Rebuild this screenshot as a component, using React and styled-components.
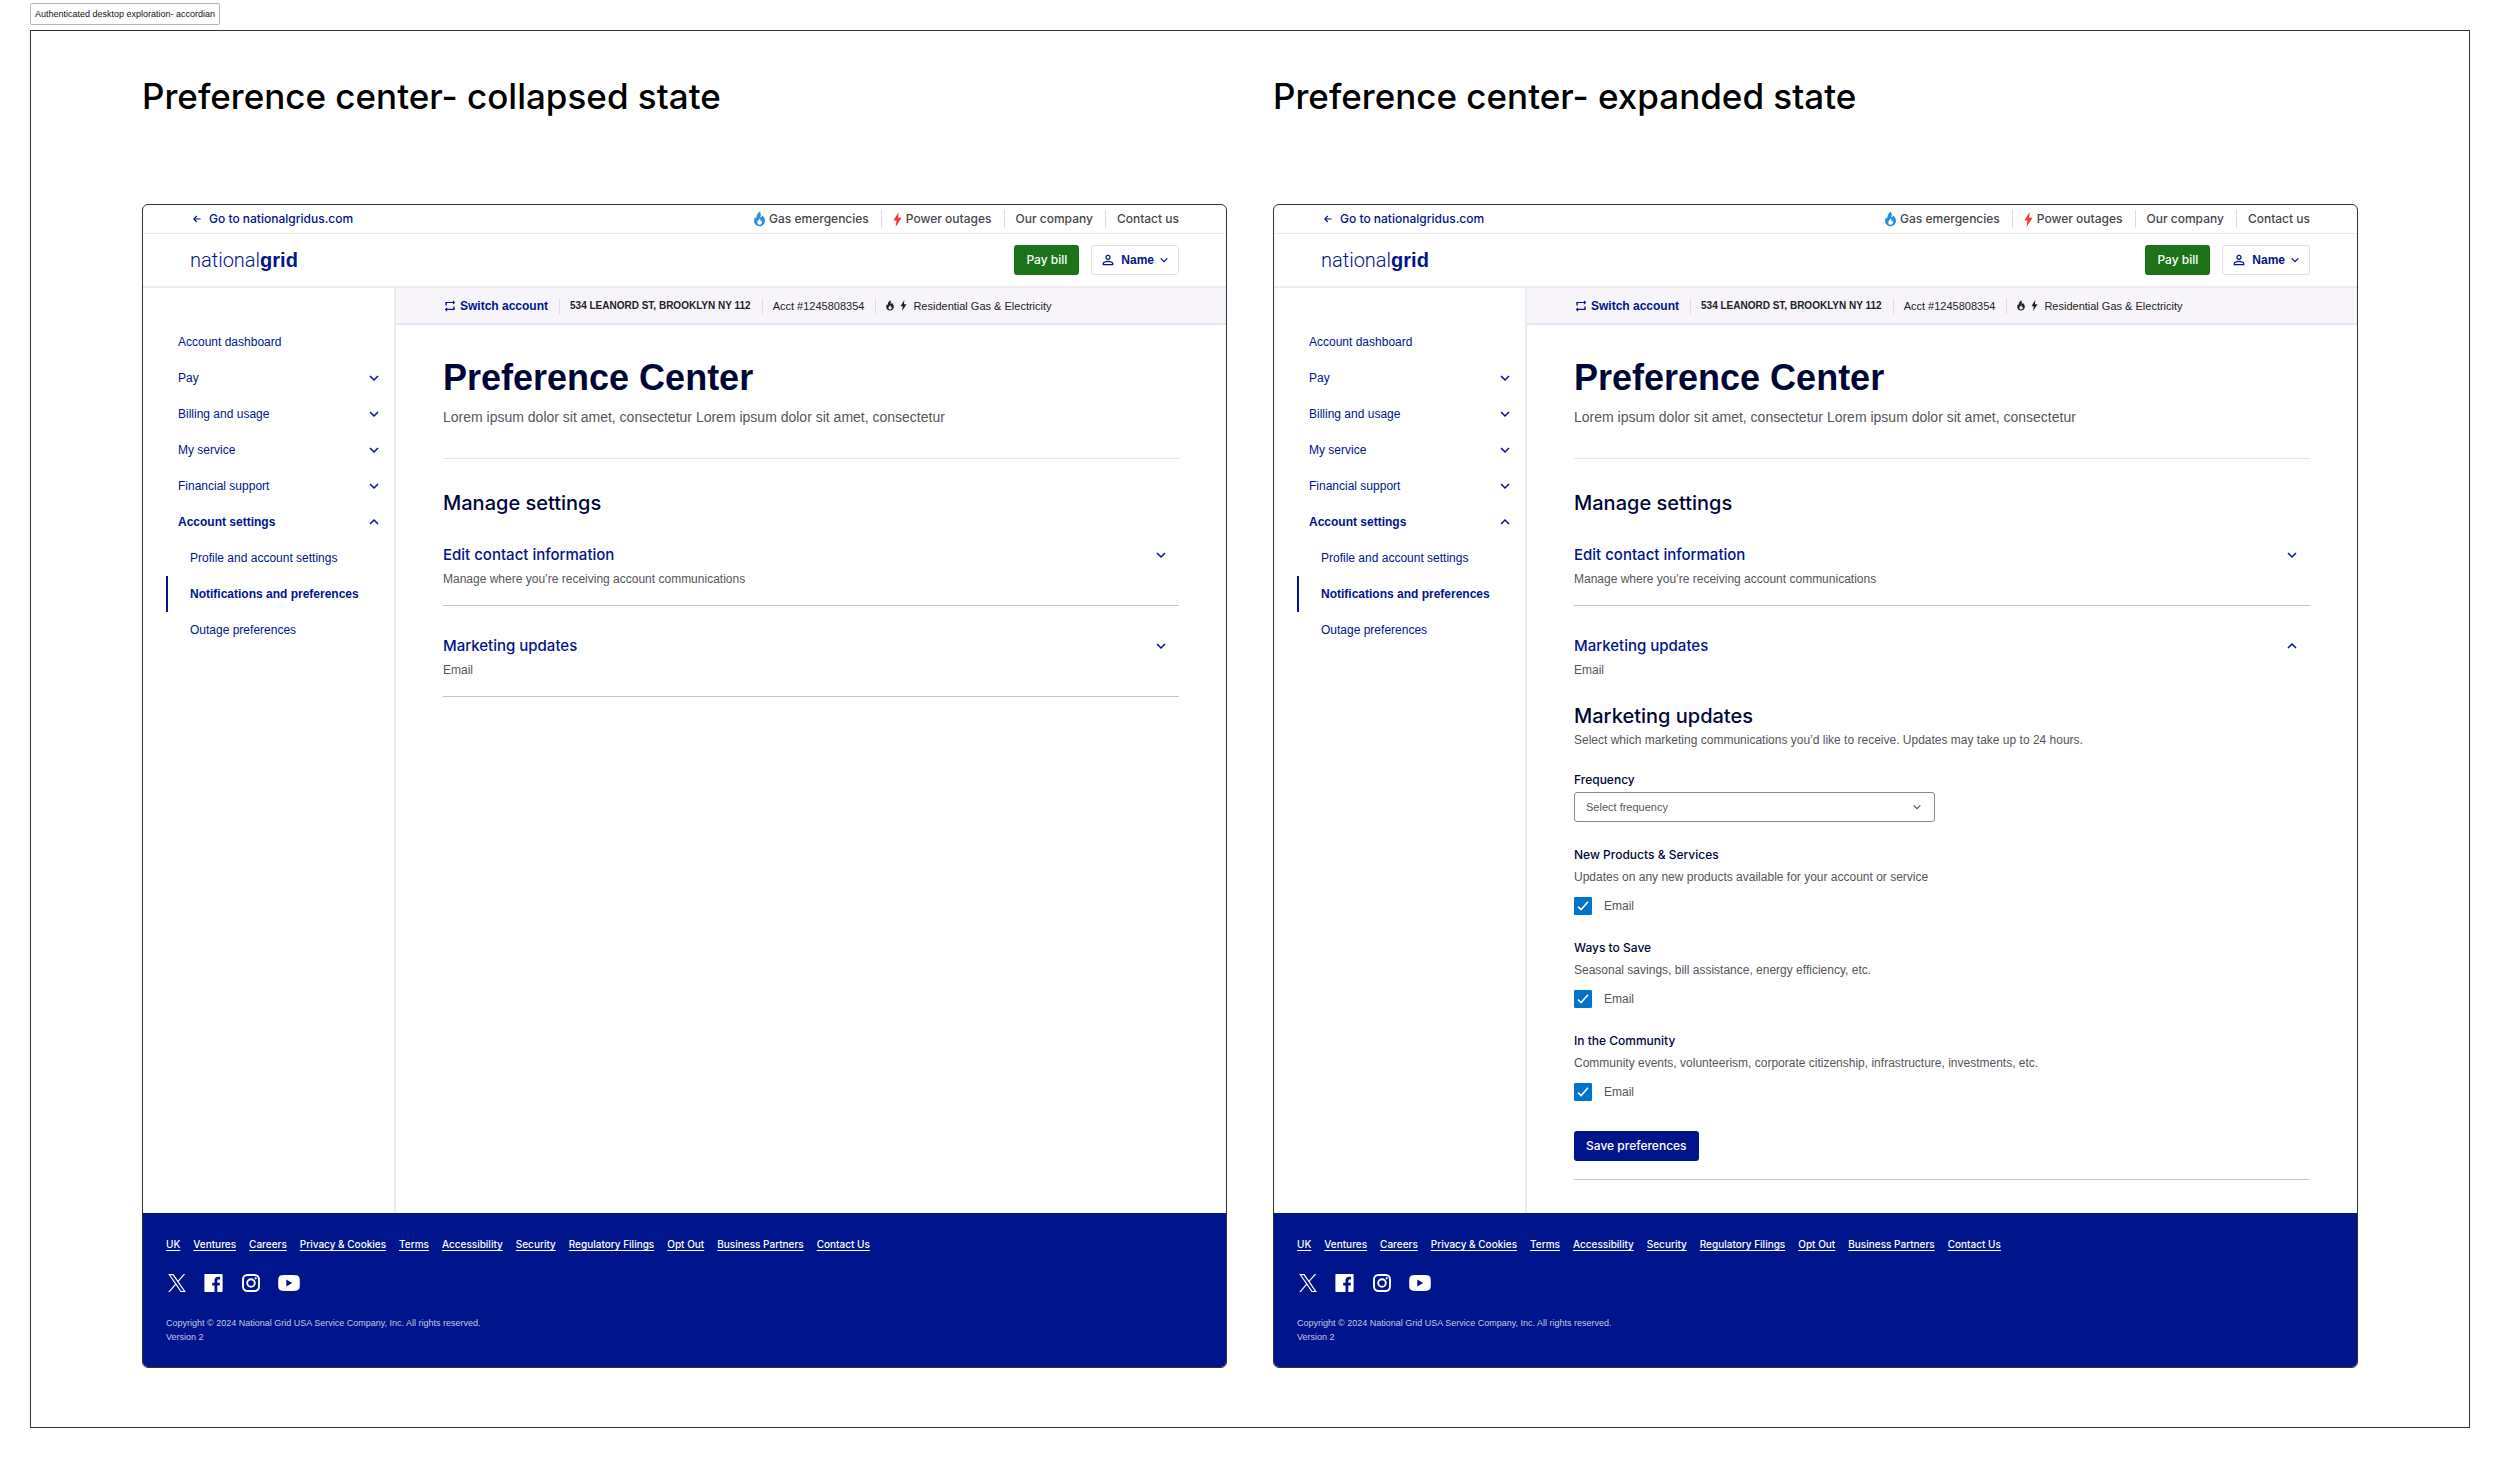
import React, { useId, useState } from "react";
import styled, { createGlobalStyle, css } from "styled-components";

const color = {
  blue: "#00148c",
  navy: "#000638",
  ink: "#222225",
  gray: "#55555a",
  nav: "#46464c",
  line: "#ececef",
  rule: "#e2e2e4",
  strong: "#c6c6c8",
  tint: "#f7f5f9",
  lilac: "#e8e4f5",
  green: "#1c731a",
  check: "#0073cd",
};

const regular = css`
  font-family: "Liberation Sans", Arial, sans-serif;
  font-weight: 400;
`;
const medium = css`
  font-family: Inter, "Liberation Sans", sans-serif;
  font-weight: 500;
`;
const bold = css`
  font-family: "Liberation Sans", Arial, sans-serif;
  font-weight: 700;
`;

const GlobalStyle = createGlobalStyle`
  *, *::before, *::after { box-sizing: border-box; }
  body { margin: 0; background: #fff; ${regular} font-size: 12px; line-height: 16px; color: ${color.gray}; }
  h1, h2, h3, h4, p, ul, fieldset, legend { margin: 0; padding: 0; border: 0; }
  ul { list-style: none; }
  a { color: inherit; text-decoration: none; }
  button { margin: 0; padding: 0; border: 0; background: none; color: inherit; cursor: pointer; }
  svg { display: block; flex: none; }
`;

/* ---------- board ---------- */

const Page = styled.div`
  padding: 3px 30px 31px;
`;

const Tag = styled.div`
  width: fit-content;
  height: 22px;
  margin-bottom: 5px;
  padding: 0 4px;
  border: 1px solid #b4b4b4;
  border-radius: 2px;
  font-size: 9px;
  line-height: 20px;
  color: #111;
`;

const Board = styled.main`
  display: grid;
  grid-template-columns: repeat(2, minmax(0, 1fr));
  gap: 46px;
  padding: 43px 111px 59px;
  border: 1px solid #333;
`;

const Column = styled.section`
  display: flex;
  flex-direction: column;
  gap: 86px;
`;

const BoardTitle = styled.h2`
  ${medium}
  font-size: 35px;
  line-height: 44px;
  color: #000;
`;

const Screen = styled.div`
  flex: 1;
  display: flex;
  flex-direction: column;
  border: 1px solid #333;
  border-radius: 6px;
  overflow: hidden;
`;

/* ---------- top of the site ---------- */

const TopBar = styled.div`
  display: flex;
  justify-content: space-between;
  align-items: center;
  height: 29px;
  padding: 0 47px 0 50px;
  border-bottom: 1px solid ${color.line};
`;

const BackLink = styled.a`
  ${medium}
  display: flex;
  align-items: center;
  gap: 8px;
  color: ${color.blue};
`;

const TopLinks = styled.ul`
  display: flex;
  align-items: center;
`;

const TopItem = styled.li`
  height: 18px;
  padding: 0 12px 0 11px;
  border-right: 1px solid #dcdce0;

  &:last-child {
    padding-right: 0;
    border-right: 0;
  }
`;

const TopLink = styled.a`
  ${medium}
  display: flex;
  align-items: center;
  gap: 4px;
  line-height: 18px;
  color: ${color.nav};
`;

const Header = styled.header`
  display: flex;
  align-items: center;
  height: 54px;
  gap: 12px;
  padding: 0 47px;
  border-bottom: 2px solid ${color.line};
`;

const Logo = styled.a`
  margin-right: auto;
  font-family: Roboto, "Liberation Sans", sans-serif;
  font-weight: 300;
  font-size: 20px;
  line-height: 24px;
  color: ${color.blue};

  b {
    ${bold}
  }
`;

const Button = styled.button`
  ${medium}
  height: 30px;
  padding: 0 12px;
  border-radius: 3px;
  font-size: 12px;
  line-height: 16px;
  color: #fff;
  background: ${(p) => p.$fill};
`;

const NameButton = styled(Button)`
  ${bold}
  display: flex;
  align-items: center;
  gap: 5px;
  padding: 0 9px 0 8px;
  border: 1px solid #e0e0e4;
  color: ${color.blue};
  background: #fff;
`;

/* ---------- body ---------- */

const Body = styled.div`
  flex: 1;
  display: flex;
`;

const SideNav = styled.nav`
  flex: none;
  width: 253px;
  padding: 36px 14px 36px 23px;
  border-right: 2px solid ${color.line};
`;

const sideRow = css`
  ${regular}
  display: flex;
  justify-content: space-between;
  align-items: center;
  width: 100%;
  height: 36px;
  font-size: 12px;
  line-height: 16px;
  color: ${color.blue};
  border-left: 2px solid transparent;
  padding-left: 10px;
  text-align: left;
`;

const SideLink = styled.a`
  ${sideRow}
  ${(p) => p.$nested && css`padding-left: 22px;`}
  ${(p) => p.$current && css`
    ${bold}
    border-left-color: ${color.blue};
  `}
`;

const SideToggle = styled.button`
  ${sideRow}
  border-left: 2px solid transparent;
  padding-left: 10px;
  ${(p) => p.$open && bold}
`;

const Main = styled.div`
  flex: 1;
  min-width: 0;
`;

const AccountBar = styled.div`
  display: flex;
  align-items: center;
  height: 37px;
  padding: 0 47px;
  background: ${color.tint};
  border-bottom: 2px solid ${color.lilac};
  color: ${color.ink};
`;

const AccountItem = styled.div`
  display: flex;
  align-items: center;
  gap: 6px;
  height: 16px;
  padding: 0 11px 0 10px;
  border-right: 1px solid #e2d9ee;
  font-size: 11px;
  line-height: 16px;
  white-space: nowrap;

  &:first-child {
    padding-left: 0;
  }
  &:last-child {
    border-right: 0;
  }
`;

const SwitchButton = styled.button`
  ${bold}
  display: flex;
  align-items: center;
  gap: 3px;
  font-size: 12px;
  line-height: 16px;
  color: ${color.blue};
`;

const Address = styled.strong`
  ${bold}
  font-size: 10px;
`;

const Content = styled.div`
  padding: 33px 47px;
`;

const PageTitle = styled.h1`
  ${bold}
  font-size: 36px;
  line-height: 40px;
  color: ${color.navy};
`;

const Intro = styled.p`
  margin-top: 9px;
  padding-bottom: 31px;
  border-bottom: 1px solid ${color.rule};
  font-size: 14px;
  line-height: 20px;
`;

const SectionTitle = styled.h2`
  ${medium}
  font-size: 20px;
  line-height: 24px;
  color: ${color.navy};
`;

const Settings = styled.div`
  padding-top: 32px;
`;

const Accordion = styled.section`
  padding: 30px 0 18px;
  border-bottom: 1px solid ${color.strong};
`;

const AccordionToggle = styled.button`
  ${medium}
  display: flex;
  justify-content: space-between;
  align-items: center;
  width: 100%;
  padding-right: 12px;
  font-size: 15px;
  line-height: 20px;
  color: ${color.blue};
  text-align: left;
`;

const Note = styled.p`
  margin-top: ${(p) => (p.$tight ? 4 : 6)}px;
`;

/* ---------- marketing form ---------- */

const Form = styled.form`
  margin-top: 26px;
`;

const Field = styled.div`
  display: grid;
  gap: 4px;
  margin-top: 24px;
`;

const label = css`
  ${medium}
  font-size: 12px;
  line-height: 16px;
  color: ${color.navy};
`;

const FieldLabel = styled.label`
  ${label}
`;

const SelectBox = styled.div`
  display: grid;
  align-items: center;
  width: 100%;
  max-width: 361px;

  > * {
    grid-area: 1 / 1;
  }
  > svg {
    justify-self: end;
    margin-right: 13px;
    pointer-events: none;
  }
`;

const Select = styled.select`
  ${regular}
  appearance: none;
  width: 100%;
  height: 30px;
  padding: 0 32px 0 11px;
  border: 1px solid #88888c;
  border-radius: 3px;
  background: #fff;
  font-size: 11px;
  color: ${color.gray};
`;

const Group = styled.fieldset`
  margin-top: 25px;
`;

const GroupTitle = styled.legend`
  ${label}
`;

const CheckRow = styled.label`
  display: flex;
  align-items: center;
  gap: 12px;
  width: fit-content;
  margin-top: 12px;
`;

const CheckBox = styled.span`
  display: grid;
  place-items: center;

  > * {
    grid-area: 1 / 1;
  }
  > svg {
    pointer-events: none;
  }
`;

const CheckInput = styled.input`
  appearance: none;
  width: 18px;
  height: 18px;
  margin: 0;
  border: 1px solid ${color.check};
  border-radius: 1px;

  &:checked {
    background: ${color.check};
  }
`;

const Actions = styled.div`
  display: flex;
  margin-top: 30px;
`;

/* ---------- footer ---------- */

const Footer = styled.footer`
  padding: 23px;
  background: ${color.blue};
  color: #fff;
`;

const FooterLinks = styled.ul`
  ${medium}
  display: flex;
  flex-wrap: wrap;
  gap: 13px;
  font-size: 10px;
  line-height: 16px;

  a {
    text-decoration: underline 1px;
    text-underline-offset: 2px;
    text-decoration-skip-ink: none;
  }
`;

const Social = styled.ul`
  display: flex;
  align-items: center;
  gap: 18px;
  height: 18px;
  margin: 22px 0 24px 2px;
`;

const Legal = styled.p`
  font-size: 9px;
  line-height: 14px;
  color: #c3c8e6;
`;

/* ---------- icons ---------- */

const Chevron = ({ up, size = 12, stroke = color.blue }) => (
  <svg width={size} height={size} viewBox="0 0 12 12" fill="none" stroke={stroke} strokeWidth="1.5" aria-hidden="true">
    <path d={up ? "M2 8l4-4 4 4" : "M2 4l4 4 4-4"} />
  </svg>
);

const ArrowLeft = () => (
  <svg width="8" height="8" viewBox="0 0 8 8" fill="none" stroke={color.blue} strokeWidth="1.1" aria-hidden="true">
    <path d="M7.6 4H.9M3.8 1L.8 4l3 3" />
  </svg>
);

const Flame = ({ width = 11, height = 16, fill = "currentColor" }) => (
  <svg width={width} height={height} viewBox="4 0 16 23" fill={fill} fillRule="evenodd" aria-hidden="true">
    <path d="M12.600.67s1.300 2.650 1.300 5c0 1.300-.5 2.300-1.300 2.900 1.500-.1 2.800-.9 3.500-2.300C18.500 8.500 20 11 20 14c0 4.420-3.580 8-8 8s-8-3.580-8-8c0-1.900.5-3.700 1.500-5.200.3.900 1 1.500 1.800 1.700C7.200 6.500 9.200 3 12.600.67zM12.500 10.500c-.6 1.900-3.700 3.100-3.700 6 0 1.900 1.500 3.200 3.300 3.200 2.100 0 3.500-1.500 3.500-3.500 0-.9-.2-1.700-.7-2.500-.3.900-.9 1.400-1.600 1.500.3-1.600.1-3.300-.8-4.700z" />
  </svg>
);

const Bolt = ({ width = 9, height = 15, fill = "currentColor" }) => (
  <svg width={width} height={height} viewBox="0 0 9 15" fill={fill} aria-hidden="true">
    <path d="M5.600 0L.4 8.400h3.100L2.600 15l6-9.200H5.100z" />
  </svg>
);

const Repeat = () => (
  <svg width="14" height="14" viewBox="0 0 24 24" fill="currentColor" aria-hidden="true">
    <path d="M7 7h10v3l4-4-4-4v3H4v6h2.400V7.400zm10 9.600H7V14l-4 4 4 4v-3h13v-6h-2.400v3.600z" />
  </svg>
);

const Person = () => (
  <svg width="16" height="16" viewBox="0 0 24 24" fill="currentColor" aria-hidden="true">
    <path d="M12 5.9c1.16 0 2.1.94 2.1 2.1s-.94 2.1-2.1 2.1S9.9 9.16 9.9 8s.94-2.1 2.1-2.1m0 9c2.97 0 6.1 1.46 6.1 2.1v1.1H5.9V17c0-.64 3.13-2.1 6.1-2.1M12 4C9.79 4 8 5.79 8 8s1.79 4 4 4 4-1.79 4-4-1.79-4-4-4zm0 9c-2.67 0-8 1.34-8 4v3h16v-3c0-2.66-5.33-4-8-4z" />
  </svg>
);

const Tick = () => (
  <svg width="12" height="12" viewBox="0 0 12 12" fill="none" stroke="#fff" strokeWidth="1.5" aria-hidden="true">
    <path d="M1 6.6l3.1 3L11 1.8" />
  </svg>
);

const XLogo = () => (
  <svg width="18" height="18" viewBox="0 0 24 24" fill="#fff" aria-hidden="true">
    <path d="M14.234 10.162L22.977 0h-2.072l-7.591 8.824L7.251 0H.258l9.168 13.343L.258 24H2.33l8.016-9.318L16.749 24h6.993zm-2.837 3.299l-.929-1.329L3.076 1.56h3.182l5.965 8.532.929 1.329 7.754 11.09h-3.182z" />
  </svg>
);

const FacebookLogo = () => (
  <svg width="20" height="18" viewBox="0 0 20 18" fill="#fff" aria-hidden="true">
    <path d="M1.4 0h16.2c.6 0 1 .4 1 1v16c0 .6-.4 1-1 1h-4.3v-6.5h2.3l.4-2.8h-2.7V7c0-.9.4-1.5 1.5-1.5H16V3c-.4-.1-1.100-.2-2-.2-2.100 0-3.500 1.300-3.500 3.600v2.300H8.200v2.800h2.300V18H1.400c-.6 0-1-.4-1-1V1c0-.6.4-1 1-1z" />
  </svg>
);

const InstagramLogo = () => (
  <svg width="18" height="18" viewBox="0 0 18 18" fill="none" stroke="#fff" strokeWidth="1.9" aria-hidden="true">
    <rect x="1" y="1" width="16" height="16" rx="4.400" />
    <circle cx="9" cy="9" r="3.800" />
    <circle cx="13.700" cy="4.300" r="1.100" fill="#fff" stroke="none" />
  </svg>
);

const YouTubeLogo = () => (
  <svg width="22" height="16" viewBox="0 0 22 16" fill="#fff" fillRule="evenodd" aria-hidden="true">
    <path d="M4 .3C8 0 14 0 18 .3c2.300.2 3.500 1.500 3.700 3.700.2 2.600.2 5.400 0 8-.2 2.200-1.400 3.500-3.700 3.700-4 .3-10 .3-14 0C1.700 15.500.5 14.200.3 12 .1 9.400.1 6.600.3 4 .5 1.800 1.700.5 4 .3zM8.300 4.600v6.800L14.200 8z" />
  </svg>
);

/* ---------- data ---------- */

const sideItems = ["Pay", "Billing and usage", "My service", "Financial support"];
const footerItems = [
  "UK", "Ventures", "Careers", "Privacy & Cookies", "Terms", "Accessibility", "Security",
  "Regulatory Filings", "Opt Out", "Business Partners", "Contact Us",
];
const socialItems = [
  ["X", XLogo], ["Facebook", FacebookLogo], ["Instagram", InstagramLogo], ["YouTube", YouTubeLogo],
];
const groups = [
  ["New Products & Services", "Updates on any new products available for your account or service"],
  ["Ways to Save", "Seasonal savings, bill assistance, energy efficiency, etc."],
  ["In the Community", "Community events, volunteerism, corporate citizenship, infrastructure, investments, etc."],
];

/* ---------- parts ---------- */

function Preference({ title, note }) {
  return (
    <Group>
      <GroupTitle>{title}</GroupTitle>
      <Note>{note}</Note>
      <CheckRow>
        <CheckBox>
          <CheckInput type="checkbox" defaultChecked />
          <Tick />
        </CheckBox>
        Email
      </CheckRow>
    </Group>
  );
}

function MarketingForm() {
  const id = useId();
  return (
    <Form onSubmit={(e) => e.preventDefault()}>
      <SectionTitle as="h3">Marketing updates</SectionTitle>
      <Note $tight>
        Select which marketing communications you’d like to receive. Updates may take up to 24 hours.
      </Note>
      <Field>
        <FieldLabel htmlFor={id}>Frequency</FieldLabel>
        <SelectBox>
          <Select id={id} defaultValue="">
            <option value="">Select frequency</option>
          </Select>
          <Chevron size={10} stroke={color.gray} />
        </SelectBox>
      </Field>
      {groups.map(([title, note]) => (
        <Preference key={title} title={title} note={note} />
      ))}
      <Actions>
        <Button type="submit" $fill={color.blue}>Save preferences</Button>
      </Actions>
    </Form>
  );
}

function Site({ expanded }) {
  const [open, setOpen] = useState(expanded);
  return (
    <Screen>
      <TopBar>
        <BackLink href="#"><ArrowLeft />Go to nationalgridus.com</BackLink>
        <TopLinks>
          <TopItem><TopLink href="#"><Flame fill="#2b8fe0" />Gas emergencies</TopLink></TopItem>
          <TopItem><TopLink href="#"><Bolt fill="#f2382c" />Power outages</TopLink></TopItem>
          <TopItem><TopLink href="#">Our company</TopLink></TopItem>
          <TopItem><TopLink href="#">Contact us</TopLink></TopItem>
        </TopLinks>
      </TopBar>
      <Header>
        <Logo href="#">national<b>grid</b></Logo>
        <Button type="button" $fill={color.green}>Pay bill</Button>
        <NameButton type="button"><Person />Name<Chevron size={10} /></NameButton>
      </Header>
      <Body>
        <SideNav>
          <SideLink href="#">Account dashboard</SideLink>
          {sideItems.map((name) => (
            <SideToggle key={name} type="button">{name}<Chevron /></SideToggle>
          ))}
          <SideToggle type="button" $open>Account settings<Chevron up /></SideToggle>
          <SideLink href="#" $nested>Profile and account settings</SideLink>
          <SideLink href="#" $nested $current aria-current="page">Notifications and preferences</SideLink>
          <SideLink href="#" $nested>Outage preferences</SideLink>
        </SideNav>
        <Main>
          <AccountBar>
            <AccountItem><SwitchButton type="button"><Repeat />Switch account</SwitchButton></AccountItem>
            <AccountItem><Address>534 LEANORD ST, BROOKLYN NY 112</Address></AccountItem>
            <AccountItem>Acct #1245808354</AccountItem>
            <AccountItem>
              <Flame width={8} height={11} />
              <Bolt width={7} height={11} />
              Residential Gas &amp; Electricity
            </AccountItem>
          </AccountBar>
          <Content>
            <PageTitle>Preference Center</PageTitle>
            <Intro>Lorem ipsum dolor sit amet, consectetur Lorem ipsum dolor sit amet, consectetur</Intro>
            <Settings>
              <SectionTitle>Manage settings</SectionTitle>
              <Accordion>
                <AccordionToggle type="button" aria-expanded="false">
                  Edit contact information<Chevron />
                </AccordionToggle>
                <Note>Manage where you’re receiving account communications</Note>
              </Accordion>
              <Accordion>
                <AccordionToggle type="button" aria-expanded={open} onClick={() => setOpen(!open)}>
                  Marketing updates<Chevron up={open} />
                </AccordionToggle>
                <Note>Email</Note>
                {open && <MarketingForm />}
              </Accordion>
            </Settings>
          </Content>
        </Main>
      </Body>
      <Footer>
        <FooterLinks>
          {footerItems.map((name) => <li key={name}><a href="#">{name}</a></li>)}
        </FooterLinks>
        <Social>
          {socialItems.map(([name, Icon]) => <li key={name}><a href="#" aria-label={name}><Icon /></a></li>)}
        </Social>
        <Legal>Copyright © 2024 National Grid USA Service Company, Inc. All rights reserved.</Legal>
        <Legal>Version 2</Legal>
      </Footer>
    </Screen>
  );
}

export default function App() {
  return (
    <>
      <GlobalStyle />
      <Page>
        <Tag>Authenticated desktop exploration- accordian</Tag>
        <Board>
          <Column>
            <BoardTitle>Preference center- collapsed state</BoardTitle>
            <Site expanded={false} />
          </Column>
          <Column>
            <BoardTitle>Preference center- expanded state</BoardTitle>
            <Site expanded />
          </Column>
        </Board>
      </Page>
    </>
  );
}
